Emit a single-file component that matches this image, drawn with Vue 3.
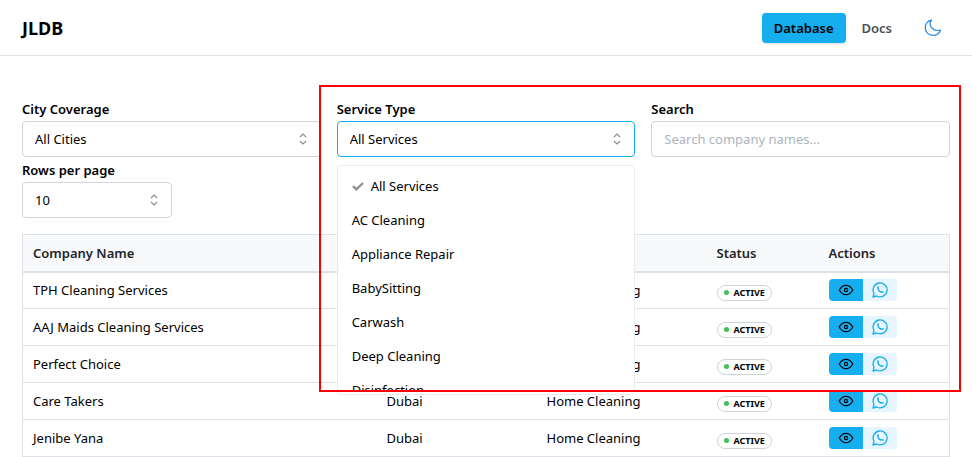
<script setup>
import { ref } from 'vue'

const city = ref('All Cities')
const service = ref('All Services')
const pageSize = ref('10')
const search = ref('')

const services = [
  'All Services',
  'AC Cleaning',
  'Appliance Repair',
  'BabySitting',
  'Carwash',
  'Deep Cleaning',
  'Disinfection',
]

const companies = [
  'TPH Cleaning Services',
  'AAJ Maids Cleaning Services',
  'Perfect Choice',
  'Care Takers',
  'Jenibe Yana',
].map((name) => ({ name, city: 'Dubai', service: 'Home Cleaning', status: 'Active' }))
</script>

<template>
  <header class="header">
    <h1 class="brand">JLDB</h1>
    <nav class="nav">
      <a class="nav-link active" href="#database">Database</a>
      <a class="nav-link" href="#docs">Docs</a>
      <button class="theme" type="button" aria-label="Toggle colour scheme">
        <svg viewBox="0 0 18 18" width="18" height="18" fill="none" stroke="currentColor" stroke-width="1.2" stroke-linejoin="round">
          <path d="M7.6 1.2C3.9 1.7 1.2 4.8 1.2 8.6c0 4.3 3.4 7.8 7.7 7.8 3.5 0 6.500-2.200 7.500-5.400-1 .4-2 .6-3.100.5C9.100 11.300 6 8 6 4.500c0-1.200.6-2.400 1.600-3.300z" />
        </svg>
      </button>
    </nav>
  </header>

  <main class="content">
    <section class="filters">
      <div class="field">
        <label for="city">City Coverage</label>
        <div class="control">
          <select id="city" v-model="city">
            <option>All Cities</option>
            <option>Dubai</option>
          </select>
          <svg class="caret" viewBox="0 0 8 12" width="8" height="12"><path d="M1 4l3-3 3 3M1 8l3 3 3-3" /></svg>
        </div>
      </div>

      <div class="field">
        <label for="service">Service Type</label>
        <div class="control open">
          <select id="service" v-model="service">
            <option v-for="item in services" :key="item">{{ item }}</option>
          </select>
          <svg class="caret" viewBox="0 0 8 12" width="8" height="12"><path d="M1 4l3-3 3 3M1 8l3 3 3-3" /></svg>
          <div class="dropdown">
            <ul class="options" role="listbox" aria-label="Service Type">
              <li
                v-for="item in services"
                :key="item"
                class="option"
                role="option"
                :aria-selected="item === service"
                @click="service = item"
              >
                <svg v-if="item === service" class="check" viewBox="0 0 12 9" width="12" height="9">
                  <path d="M1 4.200l3.300 3.200L11 1" />
                </svg>
                <span>{{ item }}</span>
              </li>
            </ul>
          </div>
        </div>
      </div>

      <div class="field">
        <label for="search">Search</label>
        <div class="control">
          <input id="search" v-model="search" type="text" placeholder="Search company names..." />
        </div>
      </div>
    </section>

    <div class="field page-size">
      <label for="rows">Rows per page</label>
      <div class="control">
        <select id="rows" v-model="pageSize">
          <option>10</option>
          <option>20</option>
        </select>
        <svg class="caret" viewBox="0 0 8 12" width="8" height="12"><path d="M1 4l3-3 3 3M1 8l3 3 3-3" /></svg>
      </div>
    </div>

    <table class="companies">
      <colgroup>
        <col />
        <col class="col-city" />
        <col class="col-service" />
        <col class="col-status" />
        <col class="col-actions" />
      </colgroup>
      <thead>
        <tr>
          <th>Company Name</th>
          <th>City</th>
          <th>Service</th>
          <th>Status</th>
          <th>Actions</th>
        </tr>
      </thead>
      <tbody>
        <tr v-for="company in companies" :key="company.name">
          <td>{{ company.name }}</td>
          <td>{{ company.city }}</td>
          <td>{{ company.service }}</td>
          <td>
            <div class="status"><span class="badge">{{ company.status }}</span></div>
          </td>
          <td>
            <div class="actions">
              <button class="view" type="button" :aria-label="`View ${company.name}`">
                <svg viewBox="0 0 16 12" width="16" height="12" fill="none" stroke="currentColor" stroke-width="1.200">
                  <path d="M1.200 6C3 2.900 5.300 1.300 8 1.300S13 2.900 14.800 6C13 9.100 10.700 10.700 8 10.700S3 9.100 1.200 6z" />
                  <circle cx="8" cy="6" r="1.600" />
                </svg>
              </button>
              <button class="chat" type="button" :aria-label="`WhatsApp ${company.name}`">
                <svg viewBox="0 0 16 16" width="16" height="16" fill="none" stroke="currentColor" stroke-width="1.300" stroke-linecap="round" stroke-linejoin="round">
                  <path d="M1 15l1-3.700A7 7 0 1 1 4.700 14z" />
                  <path d="M6 5v1a4 4 0 0 0 4 4h1" stroke-width="1.600" />
                </svg>
              </button>
            </div>
          </td>
        </tr>
      </tbody>
    </table>

    <div class="highlight"></div>
  </main>
</template>

<style>
body {
  margin: 0;
  background: #fff;
  overflow: hidden;
}
</style>

<style scoped>
.header,
.content {
  font-family: 'Noto Sans', 'Open Sans', sans-serif;
  font-size: 13px;
  line-height: 22px;
  color: #000;
}

.header {
  display: flex;
  align-items: center;
  justify-content: space-between;
  height: 55px;
  padding: 0 22px;
  border-bottom: 1px solid #dee2e6;
}

.brand {
  margin: 0;
  font-size: 18px;
  font-weight: 700;
}

.nav {
  display: flex;
  align-items: center;
  gap: 4px;
}

.nav-link {
  padding: 4px 12px;
  border-radius: 4px;
  color: #495057;
  font-weight: 600;
  text-decoration: none;
}

.nav-link.active {
  background: #15aeef;
  color: #000;
  box-shadow: 0 1px 3px rgba(0, 0, 0, 0.15);
}

button {
  display: flex;
  align-items: center;
  justify-content: center;
  padding: 0;
  border: 0;
  background: none;
}

.theme {
  width: 34px;
  height: 34px;
  margin-left: 8px;
  color: #228be6;
}

.content {
  position: relative;
  margin: 43px 22px 0;
}

.filters {
  display: grid;
  grid-template-columns: repeat(3, minmax(0, 1fr));
  gap: 16px;
}

label {
  display: block;
  padding-bottom: 2px;
  font-weight: 600;
  line-height: 20px;
}

.control {
  position: relative;
}

select,
input {
  display: block;
  box-sizing: border-box;
  width: 100%;
  height: 36px;
  margin: 0;
  padding: 0 12px;
  border: 1px solid #ced4da;
  border-radius: 4px;
  outline: none;
  appearance: none;
  background: #fff;
  color: #000;
  font: inherit;
}

input::placeholder {
  color: #adb5bd;
}

.open select {
  border-color: #15aeef;
}

.caret {
  position: absolute;
  top: 12px;
  right: 14px;
  fill: none;
  stroke: #868e96;
  stroke-width: 1.2;
  pointer-events: none;
}

.page-size {
  width: 150px;
  margin-top: 3px;
}

.dropdown {
  position: absolute;
  z-index: 1;
  top: 44px;
  left: 0;
  right: 0;
  padding: 3px 4px 4px;
  border: 1px solid #e9ecef;
  border-radius: 4px;
  background: #fff;
}

.options {
  height: 221px;
  margin: 0;
  padding: 0;
  overflow: hidden;
  list-style: none;
}

.option {
  display: flex;
  align-items: center;
  gap: 7px;
  height: 34px;
  padding: 0 10px;
}

.check {
  fill: none;
  stroke: #909090;
  stroke-width: 2.4;
}

.companies {
  width: 100%;
  margin-top: 16px;
  border: 1px solid #dee2e6;
  border-collapse: collapse;
  table-layout: fixed;
}

.col-city {
  width: 160px;
}

.col-service {
  width: 170px;
}

.col-status {
  width: 112px;
}

.col-actions {
  width: 131px;
}

th,
td {
  box-sizing: border-box;
  height: 37px;
  padding: 0 10px;
  border-bottom: 1px solid #dee2e6;
  text-align: left;
}

th {
  border-bottom-width: 2px;
  background: #f8f9fa;
  color: #212529;
  font-weight: 600;
}

.status {
  display: flex;
  padding-top: 5px;
}

.badge {
  display: flex;
  align-items: center;
  gap: 5px;
  height: 14px;
  padding: 0 6px;
  border: 1px solid #ced4da;
  border-radius: 8px;
  font-size: 9px;
  font-weight: 700;
  text-transform: uppercase;
}

.badge::before {
  content: '';
  width: 5px;
  height: 5px;
  border-radius: 50%;
  background: #40c057;
}

.actions {
  display: flex;
}

.view,
.chat {
  width: 34px;
  height: 22px;
}

.view {
  border-radius: 4px 0 0 4px;
  background: #15aeef;
  color: #000;
}

.chat {
  border-radius: 0 4px 4px 0;
  background: #e7f5ff;
  color: #15aeef;
}

.highlight {
  position: absolute;
  z-index: 2;
  top: -14px;
  right: -11px;
  left: calc((100% - 32px) / 3 - 2px);
  height: 303px;
  border: 2px solid #f00;
  pointer-events: none;
}
</style>
